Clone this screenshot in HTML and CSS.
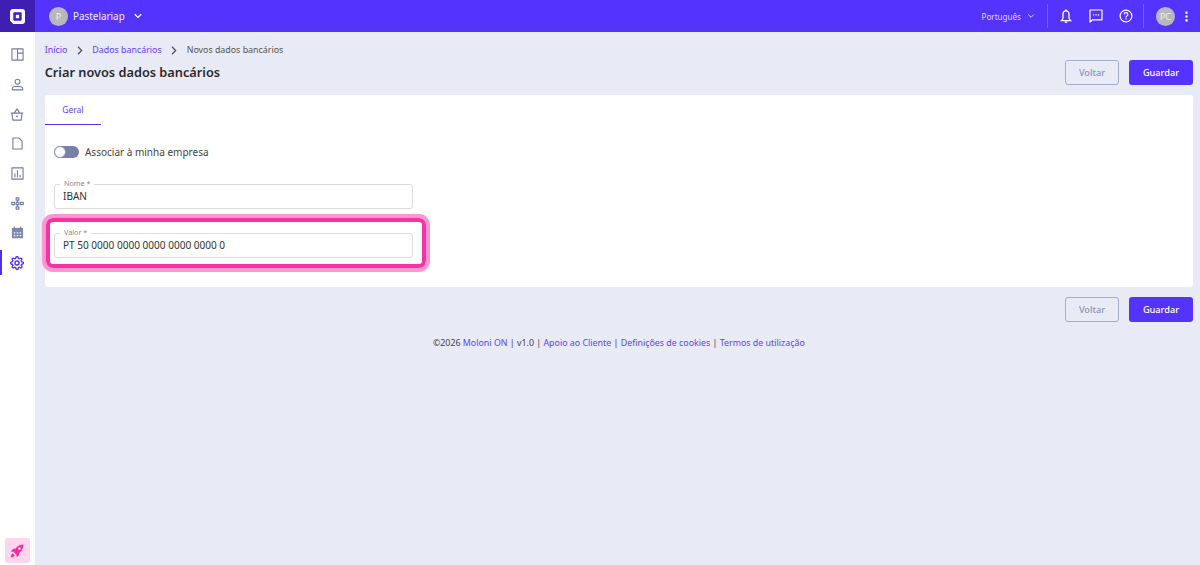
FILE: index.html
```html
<!DOCTYPE html>
<html lang="pt">
<head>
<meta charset="utf-8">
<title>Criar novos dados bancários</title>
<link rel="stylesheet" href="styles.css">
</head>
<body>
<header class="topbar">
  <div class="logo">
    <svg width="15" height="15" viewBox="0 0 18 18"><path fill="#fff" fill-rule="evenodd" d="M4 0h10.500A3.500 3.500 0 0 1 18 3.500V14.500a3.500 3.500 0 0 1-3.500 3.500H4l-4-4V4a4 4 0 0 1 4-4zm1 4a1 1 0 0 0-1 1v8a1 1 0 0 0 1 1h8a1 1 0 0 0 1-1V5a1 1 0 0 0-1-1H5zm2 3h4v4H7z"/></svg>
  </div>
  <div class="company">
    <span class="avatar">P</span>
    <span class="company-name">Pastelariap</span>
    <svg class="chev" width="8" height="6" viewBox="0 0 8 6"><path d="M.8 1.200L4 4.400l3.200-3.200" fill="none" stroke="#fff" stroke-width="1.300"/></svg>
  </div>
  <div class="top-right">
    <span class="lang">Português</span>
    <svg class="chev-small" width="8" height="6" viewBox="0 0 8 6"><path d="M1.200 1.500L4 4.300l2.800-2.800" fill="none" stroke="#d8d2ff" stroke-width="1"/></svg>
    <span class="vsep sep-a"></span>
    <svg class="bell" width="12" height="15" viewBox="0 0 12 15"><path d="M6 1.800C4 1.800 3 3.500 3 5.300v3.400c0 1.200-.7 2-1.600 2.900h9.200c-.9-.9-1.600-1.700-1.600-2.900V5.300C9 3.500 8 1.800 6 1.800z" fill="none" stroke="#fff" stroke-width="1.300"/><path d="M4.500 12.500a1.500 1.500 0 0 0 3 0zM5.200.5h1.600v1.500H5.200z" fill="#fff"/></svg>
    <svg class="chat" width="14" height="14" viewBox="0 0 14 14"><path d="M1 1h12v9.800H3.600L1 13z" fill="none" stroke="#fff" stroke-width="1.200" stroke-linejoin="round"/><path d="M3.900 5.200h1.300v1.300H3.900zM6.400 5.200h1.300v1.300H6.400zM8.900 5.200h1.300v1.300H8.900z" fill="#fff"/></svg>
    <svg class="help" width="14" height="14" viewBox="0 0 14 14"><circle cx="7" cy="7" r="5.900" fill="none" stroke="#fff" stroke-width="1.200"/><path d="M5.100 5.500c0-1.100.8-1.800 1.900-1.800s1.900.7 1.900 1.700C8.900 6.800 7 6.900 7 8.400" fill="none" stroke="#fff" stroke-width="1.150"/><path d="M6.400 9.300h1.200v1.200H6.400z" fill="#fff"/></svg>
    <span class="vsep sep-b"></span>
    <span class="avatar user">PC</span>
    <svg class="dots" width="3" height="11" viewBox="0 0 3 11"><path d="M.4.500h2.200v2.200H.4zM.4 4.400h2.200v2.200H.4zM.4 8.300h2.200v2.200H.4z" fill="#fff"/></svg>
  </div>
</header>
<div class="shell">
  <nav class="sidebar">
    <a class="nav-item"><svg width="13" height="13" viewBox="0 0 14 14"><path d="M1 1h12v12H1zM7 1v12M7 5.500h6" class="ns"/></svg></a>
    <a class="nav-item"><svg width="13" height="13" viewBox="0 0 14 14"><circle cx="7" cy="4" r="2.600" class="ns"/><path d="M1.500 12.800v-1.600c0-1.300 1.500-2.200 5.500-2.200s5.500.9 5.500 2.200v1.600z" class="ns"/></svg></a>
    <a class="nav-item"><svg width="14" height="13" viewBox="0 0 15 14"><path d="M.8 5.500h13.400M2 5.500l1 7.500h9l1-7.500M4.500 5.500L7.500 1l3 4.500" class="ns"/><circle cx="7.500" cy="9" r="1" fill="#737da9"/></svg></a>
    <a class="nav-item"><svg width="11" height="13" viewBox="0 0 12 14"><path d="M1 1h6.500L11 4.500V13H1z" class="ns"/></svg></a>
    <a class="nav-item"><svg width="13" height="13" viewBox="0 0 14 14"><path d="M1 1h12v12H1z" class="ns"/><path d="M4.200 7v4M7 3.500V11M9.800 8.500V11" class="ns"/></svg></a>
    <a class="nav-item"><svg width="13" height="13" viewBox="0 0 14 14"><path d="M5.500 1h3v2.400h-3zM.8 5.800h3v2.400h-3zM5.500 5.800h3v2.400h-3zM10.200 5.800h3v2.400h-3zM5.500 10.600h3V13h-3zM7 3.400v2.400M7 8.200v2.400" class="ns"/></svg></a>
    <a class="nav-item"><svg width="13" height="13" viewBox="0 0 14 14"><path d="M1 2h12v11.200H1z" fill="#7f88b2"/><path d="M3.500.6v3M10.500.6v3" class="ns"/><path d="M3 6.800h1.600v1.400H3zM6.200 6.800h1.600v1.400H6.200zM9.400 6.800H11v1.400H9.400zM3 9.600h1.600V11H3zM6.200 9.600h1.600V11H6.200zM9.400 9.600H11V11H9.400z" fill="#fff"/></svg></a>
    <a class="nav-item active"><svg width="14" height="14" viewBox="0 0 24 24"><circle cx="12" cy="12" r="3.500" fill="none" stroke="#4f2fff" stroke-width="2.300"/><path fill="none" stroke="#4f2fff" stroke-width="2.300" d="M19.400 15a1.650 1.650 0 0 0 .33 1.820l.06.06a2 2 0 0 1 0 2.830 2 2 0 0 1-2.830 0l-.06-.06a1.650 1.650 0 0 0-1.820-.33 1.650 1.650 0 0 0-1 1.510V21a2 2 0 0 1-2 2 2 2 0 0 1-2-2v-.09A1.650 1.650 0 0 0 9 19.400a1.650 1.650 0 0 0-1.820.33l-.06.06a2 2 0 0 1-2.830 0 2 2 0 0 1 0-2.830l.06-.06a1.650 1.650 0 0 0 .33-1.820 1.650 1.650 0 0 0-1.510-1H3a2 2 0 0 1-2-2 2 2 0 0 1 2-2h.09A1.650 1.650 0 0 0 4.600 9a1.650 1.650 0 0 0-.33-1.820l-.06-.06a2 2 0 0 1 0-2.830 2 2 0 0 1 2.830 0l.06.06a1.650 1.650 0 0 0 1.820.33H9a1.650 1.650 0 0 0 1-1.510V3a2 2 0 0 1 2-2 2 2 0 0 1 2 2v.09a1.650 1.650 0 0 0 1 1.510 1.650 1.650 0 0 0 1.820-.33l.06-.06a2 2 0 0 1 2.830 0 2 2 0 0 1 0 2.830l-.06.06a1.650 1.650 0 0 0-.33 1.820V9a1.650 1.650 0 0 0 1.510 1H21a2 2 0 0 1 2 2 2 2 0 0 1-2 2h-.09a1.650 1.650 0 0 0-1.510 1z"/></svg></a>
    <a class="rocket"><svg width="14" height="14" viewBox="0 0 14 14"><path fill="#f52fa0" d="M13.500.5c-3.500 0-6 1.200-8 4L3 5 .8 7.400l2.700.3 2.800 2.800.3 2.700L9 11l.5-2.500c2.800-2 4-4.500 4-8zM9.500 3.200a1.300 1.300 0 1 1 0 2.600 1.300 1.300 0 0 1 0-2.600zM2.800 9.300l1.900 1.900-1.600 1.700-2.500.6.500-2.500z"/></svg></a>
  </nav>
  <main class="content">
    <div class="crumbs">
      <a class="link">Início</a>
      <svg class="sep" width="6" height="9" viewBox="0 0 6 9"><path d="M1 .8l3.600 3.700L1 8.200" fill="none" stroke="#555" stroke-width="1.300"/></svg>
      <a class="link">Dados bancários</a>
      <svg class="sep" width="6" height="9" viewBox="0 0 6 9"><path d="M1 .8l3.600 3.700L1 8.200" fill="none" stroke="#555" stroke-width="1.300"/></svg>
      <span>Novos dados bancários</span>
    </div>
    <div class="title-row">
      <h1>Criar novos dados bancários</h1>
      <div class="actions"><button class="btn ghost">Voltar</button><button class="btn primary">Guardar</button></div>
    </div>
    <section class="card">
      <div class="tabs"><span class="tab">Geral</span></div>
      <div class="form">
        <div class="toggle-row"><span class="toggle"><span class="knob"></span></span><span>Associar à minha empresa</span></div>
        <div class="field"><span class="label">Nome *</span><span class="value">IBAN</span></div>
        <div class="field marked"><span class="label">Valor *</span><span class="value">PT 50 0000 0000 0000 0000 0000 0</span></div>
      </div>
    </section>
    <div class="actions bottom"><button class="btn ghost">Voltar</button><button class="btn primary">Guardar</button></div>
    <footer class="foot">©2026 <a class="link">Moloni ON</a> | v1.0 | <a class="link">Apoio ao Cliente</a> | <a class="link">Definições de cookies</a> | <a class="link">Termos de utilização</a></footer>
  </main>
</div>
</body>
</html>
```
FILE: styles.css
```css
* { box-sizing: border-box; }
html, body { margin: 0; height: 100%; }
body { font-family: "Noto Sans", "Open Sans", sans-serif; color: #333; background: #e8eaf6; overflow: hidden; }
.topbar { height: 32px; background: #5533ff; display: flex; align-items: center; color: #fff; }
.logo { width: 35px; height: 32px; background: #3f1eb4; display: flex; align-items: center; justify-content: center; }
.company { display: flex; align-items: center; margin-left: 14px; }
.avatar { width: 19px; height: 19px; border-radius: 50%; background: #b9b7bd; color: #eee; font-size: 9px; display: flex; align-items: center; justify-content: center; }
.company-name { font-size: 9.900px; margin-left: 5px; color: #f1eeff; }
.chev { margin-left: 9px; }
.top-right { margin-left: auto; display: flex; align-items: center; }
.lang { font-size: 8.100px; color: #dcd6ff; }
.chev-small { margin-left: 6px; }
.vsep { width: 1px; height: 24px; background: #7a60ff; }
.sep-a { margin-left: 12px; }
.bell { margin-left: 12px; }
.chat { margin-left: 17px; }
.help { margin-left: 16px; }
.sep-b { margin-left: 10px; }
.user { margin-left: 12px; }
.dots { margin-left: 10px; margin-right: 12px; }
.shell { display: flex; height: 533px; }
.sidebar { width: 34.700px; background: #fff; display: flex; flex-direction: column; align-items: center; padding-top: 8px; }
.nav-item { width: 100%; height: 29.700px; display: flex; align-items: center; justify-content: center; position: relative; flex: none; }
.nav-item.active::before { content: ""; position: absolute; left: 0; top: 2px; width: 2px; height: 25px; background: #4f2fff; }
.ns { fill: none; stroke: #737da9; stroke-width: 1.200; stroke-linejoin: round; }
.rocket { margin-top: auto; margin-bottom: 2px; width: 25px; height: 25px; border-radius: 3px; background: #fdd5ec; display: flex; align-items: center; justify-content: center; }
.content { flex: 1; padding: 11px 7px 0 10px; min-width: 0; }
.crumbs { display: flex; align-items: center; font-size: 8.850px; color: #555; height: 14px; }
.link { color: #5f42ff; }
.sep { margin: 0 9.500px; }
.title-row { display: flex; justify-content: space-between; align-items: center; height: 26px; margin-top: 2px; }
h1 { margin: 0; font-size: 12.750px; font-weight: 600; color: #2a2a2a; }
.actions { display: flex; gap: 10px; }
.btn { width: 54px; height: 25px; border-radius: 3px; font: 500 9.200px "Noto Sans", sans-serif; padding: 0; }
.btn.ghost { background: transparent; border: 1px solid #a4acd0; color: #8b93b5; }
.btn.primary { width: 64px; background: #5533ff; border: 0; color: #fff; }
.card { background: #fff; border-radius: 3px; margin-top: 10px; height: 192px; }
.tabs { height: 30px; }
.tab { display: flex; width: 56.300px; height: 29.500px; align-items: center; justify-content: center; font-size: 8.500px; color: #5f42ff; border-bottom: 1.500px solid #5533ff; }
.form { padding: 20px 0 0 9.300px; width: 368.300px; }
.toggle-row { display: flex; align-items: center; gap: 6px; font-size: 10px; color: #444; height: 14px; }
.toggle { width: 25px; height: 12px; border-radius: 6px; background: #7680a8; display: block; }
.knob { display: block; width: 12px; height: 12px; border-radius: 50%; background: #fff; border: 1px solid #8b93b5; }
.field { position: relative; height: 25px; border: 1px solid #dcdcdc; border-radius: 3px; padding: 4px 8px 0; font-size: 10.050px; color: #333; margin-top: 25px; display: block; }
.field + .field { margin-top: 24px; }
.label { position: absolute; top: -7px; left: 5px; background: #fff; padding: 0 4px; font-size: 7.200px; line-height: 10px; color: #8a8a8a; }
.value { display: block; line-height: 14px; }
.marked::after { content: ""; position: absolute; left: -9px; right: -14px; top: -16px; bottom: -11px; border: 4.500px solid #f533a3; border-radius: 7px; box-shadow: 0 0 0 4px #fb97d0; pointer-events: none; }
.bottom { justify-content: flex-end; margin-top: 10px; }
.foot { margin-top: 15px; text-align: center; font-size: 8.850px; color: #444; }
```
